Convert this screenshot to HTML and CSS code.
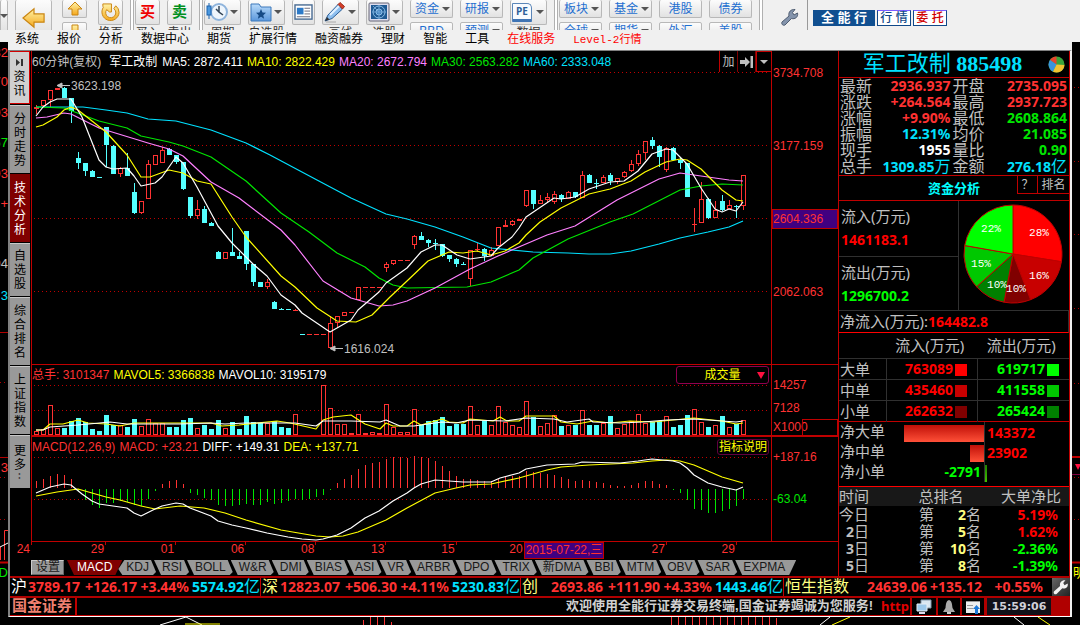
FILE: index.html
```
<!DOCTYPE html>
<html lang="zh-CN">
<head>
<meta charset="utf-8">
<title>军工改制 885498</title>
<link rel="stylesheet" href="styles.css">
</head>
<body>
<svg class="defs" aria-hidden="true">
  <defs>
    <linearGradient id="gold" x1="0" y1="0" x2="0" y2="1"><stop offset="0" stop-color="#fff3a8"/><stop offset="1" stop-color="#f5a81c"/></linearGradient>
    <linearGradient id="blue" x1="0" y1="0" x2="0" y2="1"><stop offset="0" stop-color="#b9dbfa"/><stop offset="1" stop-color="#5b97dc"/></linearGradient>
  </defs>
</svg>

<header class="top">
  <div class="toolbar">
    <button class="tool edge" aria-label="更多"><i class="caret"></i></button>
    <button class="tool back" aria-label="后退"><svg width="24" height="22" viewBox="0 0 26 24"><path d="M1 12 13 2V7.500H24V16.500H13V22Z" fill="url(#gold)" stroke="#c98512" stroke-width="1.300"/></svg></button>
    <div class="stack w25">
      <button class="tool small" aria-label="上翻"><svg width="16" height="15" viewBox="0 0 16 15"><path d="M8 1 15 8H11V14H5V8H1Z" fill="url(#gold)" stroke="#c98512"/></svg></button>
      <button class="tool small" aria-label="下翻"><svg width="16" height="15" viewBox="0 0 16 15"><path d="M8 14 15 7H11V1H5V7H1Z" fill="url(#gold)" stroke="#c98512"/></svg></button>
    </div>
    <div class="unit w25 turn"><button class="tool tall" aria-label="换页"><svg width="21" height="21" viewBox="0 0 22 22"><path d="M3.500 5.500A9 9 0 1 0 20 11A9 9 0 0 0 16.500 4L14.500 7A5.300 5.300 0 1 1 7 8L10 10.500H12V2H3V4.500Z" fill="url(#gold)" stroke="#c98512"/></svg></button><span>换页</span></div>
    <i class="rule"></i>
    <div class="unit w25"><button class="tool tall buy">买</button><span>买入</span></div>
    <div class="unit w25"><button class="tool tall sell">卖</button><span>卖出</span></div>
    <i class="rule"></i>
    <div class="unit w37"><button class="tool tall split" aria-label="周期"><svg width="22" height="22" viewBox="0 0 22 22"><circle cx="13" cy="11" r="8" fill="#eef5fc" stroke="#8fb4dc" stroke-width="2"/><path d="M13 5V11L17 14M13 11 10 8" stroke="#345" fill="none" stroke-width="1.500"/><path d="M3 2V18" stroke="#1d62ad"/><rect x="1" y="5" width="4" height="9" fill="#4b98df" stroke="#1d62ad"/></svg><i class="caret"></i></button><span>周期</span></div>
    <div class="unit w37"><button class="tool tall split" aria-label="自选股"><svg width="22" height="22" viewBox="0 0 22 22"><path d="M1 3H9L11 6H21V20H1Z" fill="url(#blue)" stroke="#3d78bb"/><path d="m11 8 1.500 3.500 3.500.3-2.700 2.400.8 3.600-3.100-2-3.100 2 .8-3.600L6 11.800l3.500-.3Z" fill="#174b86"/></svg><i class="caret"></i></button><span>自选股</span></div>
    <button class="tool tall w23" aria-label="资讯"><svg width="19" height="17" viewBox="0 0 20 18"><rect x="1" y="1" width="18" height="15" fill="#fff" stroke="#4b6d94" stroke-width="1.500"/><rect x="3" y="4" width="7" height="7" fill="#2d7ac8"/><path d="M11 4.500H17M11 7.500H17M11 10.500H17M3 13.500H17" stroke="#667"/></svg></button>
    <div class="unit w37"><button class="tool tall split" aria-label="画线"><svg width="22" height="22" viewBox="0 0 22 22"><path d="M1 20 4 14 14 3.500 18.500 8 8 17.500Z" fill="#8fc0f0" stroke="#2b5e97"/><path d="m14 3.500 2-2 4.500 4-2 2.500Z" fill="#d8402a" stroke="#9a2a1a"/><path d="m1 20 2-4 2.500 2.500Z" fill="#333"/><path d="m6 14 9-9" stroke="#e3f1ff" stroke-width="2"/><path d="M2 21H12" stroke="#aaa"/></svg><i class="caret"></i></button><span>画线</span></div>
    <div class="unit w37"><button class="tool tall split" aria-label="选股"><svg width="22" height="22" viewBox="0 0 22 22"><rect x="1" y="2" width="20" height="18" rx="1" fill="#dde" stroke="#667"/><rect x="3" y="4" width="16" height="14" fill="#1f5a93"/><circle cx="11" cy="11" r="6" fill="none" stroke="#8fc0ea"/><circle cx="11" cy="11" r="3" fill="#3f81bf" stroke="#8fc0ea"/><path d="M11 11 5 5M4 11H18M11 4V18" stroke="#6fa3d3"/></svg><i class="caret"></i></button><span>选股</span></div>
    <div class="stack w43"><button class="tool small text split">资金<i class="caret"></i></button><button class="tool small text">BBD</button></div>
    <div class="stack w43"><button class="tool small text split">研报<i class="caret"></i></button><button class="tool small text split">预测<i class="caret"></i></button></div>
    <div class="unit w37"><button class="tool tall split pe" aria-label="PE 数据"><span class="sheet">PE</span><i class="caret"></i></button><span>数据</span></div>
    <i class="rule"></i>
    <div class="stack w43"><button class="tool small text split">板块<i class="caret"></i></button><button class="tool small text split">全球<i class="caret"></i></button></div>
    <div class="stack w43"><button class="tool small text split">基金<i class="caret"></i></button><button class="tool small text split">期货<i class="caret"></i></button></div>
    <div class="stack w43"><button class="tool small text">港股</button><button class="tool small text">外汇</button></div>
    <div class="stack w43"><button class="tool small text">债券</button><button class="tool small text">美股</button></div>
    <i class="rule"></i>
    <button class="wrench" aria-label="设置"><svg width="18" height="18" viewBox="0 0 18 18"><path d="M1 14 8 8C7 4 10 1 14 1.500L11.500 4.500 13 7 16.500 5C17.500 9 14 11.500 10.500 10.500L4 17C2 18 0 16 1 14Z" fill="#8494ac" stroke="#4e5c70"/></svg></button>
    <div class="modes"><button class="mode on">全 能 行</button><button class="mode">行 情</button><button class="mode trade">委 托</button></div>
  </div>
  <nav class="menu">
    <a href="#">系统</a><a href="#">报价</a><a href="#">分析</a><a href="#">数据中心</a><a href="#">期货</a><a href="#">扩展行情</a><a href="#">融资融券</a><a href="#">理财</a><a href="#">智能</a><a href="#">工具</a><a href="#" class="hot">在线服务</a><a href="#" class="hot mono">Level-2行情</a>
  </nav>
</header>

<div class="desk">
  <svg class="strip" viewBox="0 0 8 575" preserveAspectRatio="xMinYMin slice" aria-hidden="true">
    <g font-size="13" text-anchor="end" fill="#ff3232"><text x="8" y="15">82</text><text x="8" y="44">70</text><text x="8" y="75">93</text><text x="8" y="105" fill="#00e600">67</text><text x="8" y="136">93</text><text x="8" y="166">+</text><text x="8" y="226" fill="#c0c0c0">94</text><text x="8" y="258" fill="#00e1ff">3</text><text x="8" y="430">3</text><text x="8" y="535" fill="#00e600">D</text></g>
    <path d="M0 290.500H8M0 415.500H8" stroke="#b00000"/><path d="M0 340.500H8M0 435.500H8M0 477.500H8" stroke="#b00000" stroke-dasharray="1 3"/>
    <path d="M4.500 518V488.500H8M.5 518V505" stroke="#ff3232" fill="none"/><path d="M0 505 8 501" stroke="#fff"/><path d="M0 520.500H8" stroke="#c00000" stroke-width="2"/>
  </svg>

  <div class="window">
    <div class="workspace">
      <main class="left">
        <div class="upper">
          <nav class="side">
            <button class="s1"><svg width="9" height="9" viewBox="0 0 9 9"><path d="M1 1 5 4.500 1 8ZM6 1H8V8H6Z" fill="#333"/></svg>资讯</button>
            <button class="s2">分时走势</button>
            <button class="s2 on">技术分析</button>
            <button class="s3">自选股</button>
            <button class="s2">综合排名</button>
            <button class="s2">上证指数</button>
            <button class="s1 more">更多<small>··</small></button>
          </nav>
          <div class="charts">
            <section class="pane">
              <div class="plot">
                <div class="legend">
                  <span class="gray">60分钟(复权)</span><span class="white name">军工改制</span><span class="white">MA5: 2872.411</span><span class="yellow">MA10: 2822.429</span><span class="pink">MA20: 2672.794</span><span class="green">MA30: 2563.282</span><span class="cyan">MA60: 2333.048</span>
                  <div class="tools"><button>加</button><button aria-label="最后一根"><svg width="13" height="12" viewBox="0 0 13 12"><path d="M0 4H5V1L10 6 5 11V8H0ZM10.500 0H13V12H10.500Z" fill="#c0c0c0"/></svg></button><button aria-label="菜单" class="boxed"><i class="caret"></i></button></div>
                </div>
                <svg id="price" class="chart" height="292" viewBox="32 72 739 292" preserveAspectRatio="none" role="img" aria-label="60分钟K线"></svg>
              </div>
              <div class="axis price"><span>3734.708</span><span>3177.159</span><span class="mark">2604.336</span><span>2062.063</span></div>
            </section>
            <section class="pane thick">
              <div class="plot">
                <div class="legend low">
                  <span class="red">总手: 3101347</span><span class="yellow">MAVOL5: 3366838</span><span class="white">MAVOL10: 3195179</span>
                  <label class="pick"><select aria-label="副图指标"><option>成交量</option></select><i></i></label>
                </div>
                <svg id="volume" class="chart" height="50" viewBox="32 385 739 50" preserveAspectRatio="none" role="img" aria-label="成交量"></svg>
              </div>
              <div class="axis vol"><span>14257</span><span>7128</span><span>X1000</span></div>
            </section>
            <section class="pane">
              <div class="plot">
                <div class="legend low">
                  <span class="red">MACD(12,26,9)</span><span class="red">MACD: +23.21</span><span class="white">DIFF: +149.31</span><span class="yellow">DEA: +137.71</span>
                  <button class="explain">指标说明</button>
                </div>
                <svg id="macd" class="chart" height="84" viewBox="32 457 739 84" preserveAspectRatio="none" role="img" aria-label="MACD"></svg>
              </div>
              <div class="axis osc"><span>+187.16</span><span class="green">-63.04</span></div>
            </section>
          </div>
        </div>
        <div class="dates"><span>24</span><span>29</span><span>01</span><span>06</span><span>08</span><span>13</span><span>15</span><span class="under">20</span><span><b>2015-07-22,三</b>27</span><span>29</span></div>
        <div class="tabs">
          <button class="set">设置</button><button class="on">MACD</button><button>KDJ</button><button>RSI</button><button>BOLL</button><button>W&amp;R</button><button>DMI</button><button>BIAS</button><button>ASI</button><button>VR</button><button>ARBR</button><button>DPO</button><button>TRIX</button><button>新DMA</button><button>BBI</button><button>MTM</button><button>OBV</button><button>SAR</button><button class="last">EXPMA</button>
        </div>
      </main>

      <aside class="quote">
        <h1><span><em>军工改制</em> 885498</span>
          <svg width="17" height="17" viewBox="0 0 17 17"><circle cx="8.500" cy="8.500" r="8" fill="#3aa53a"/><path d="M8.500 8.500V.5A8 8 0 0 0 2 4Z" fill="#e8452c"/><path d="M8.500 8.500 2 4A8 8 0 0 0 5 15.700Z" fill="#3b93dd"/><path d="M8.500 8.500 5 15.700A8 8 0 0 0 16.500 9Z" fill="#f2c230"/></svg></h1>
        <dl class="facts">
          <dt>最新</dt><dd class="red">2936.937</dd><dt>开盘</dt><dd class="red">2735.095</dd>
          <dt>涨跌</dt><dd class="red">+264.564</dd><dt>最高</dt><dd class="red">2937.723</dd>
          <dt>涨幅</dt><dd class="red">+9.90%</dd><dt>最低</dt><dd class="green">2608.864</dd>
          <dt>振幅</dt><dd class="cyan">12.31%</dd><dt>均价</dt><dd class="green">21.085</dd>
          <dt>现手</dt><dd class="white">1955</dd><dt>量比</dt><dd class="green">0.90</dd>
          <dt>总手</dt><dd class="cyan">1309.85<em>万</em></dd><dt>金额</dt><dd class="cyan">276.18<em>亿</em></dd>
        </dl>
        <div class="fundhead"><h2>资金分析</h2><button>？</button><button>排名</button></div>
        <div class="flow">
          <div class="flowtext">
            <div><span>流入(万元)</span><b class="hotred">1461183.1</b></div>
            <div><span>流出(万元)</span><b class="lime">1296700.2</b></div>
          </div>
          <svg class="pie" width="100" height="100" viewBox="0 0 100 100" role="img" aria-label="资金占比">
            <g stroke="#c00000"><path d="M50 50V1A49 49 0 0 1 98.400 57.700Z" fill="#ff0000"/><path d="M50 50 98.400 57.700A49 49 0 0 1 67.600 95.700Z" fill="#c80000"/><path d="M50 50 67.600 95.700A49 49 0 0 1 41.100 98.200Z" fill="#800000"/><path d="M50 50 41.100 98.200A49 49 0 0 1 13.600 82.800Z" fill="#008000"/><path d="M50 50 13.600 82.800A49 49 0 0 1 1.700 41.500Z" fill="#00c800"/><path d="M50 50 1.700 41.500A49 49 0 0 1 50 1Z" fill="#00ff00"/></g>
            <g fill="#fff" text-anchor="middle"><text x="76" y="32">28%</text><text x="76" y="75">16%</text><text x="53" y="88">10%</text><text x="34" y="84">10%</text><text x="18" y="63">15%</text><text x="28" y="28">22%</text></g>
          </svg>
        </div>
        <p class="net">净流入(万元):<b class="hotred">164482.8</b></p>
        <table class="orders">
          <thead><tr><th></th><th>流入(万元)</th><th>流出(万元)</th></tr></thead>
          <tbody>
            <tr><th>大单</th><td class="hotred">763089<i class="r1"></i></td><td class="lime">619717<i class="g1"></i></td></tr>
            <tr><th>中单</th><td class="hotred">435460<i class="r2"></i></td><td class="lime">411558<i class="g2"></i></td></tr>
            <tr><th>小单</th><td class="hotred">262632<i class="r3"></i></td><td class="lime">265424<i class="g3"></i></td></tr>
          </tbody>
        </table>
        <div class="bars">
          <div><span>净大单</span><span class="neg"><i style="width:80px"></i></span><b class="hotred">143372</b></div>
          <div><span>净中单</span><span class="neg"><i style="width:14px"></i></span><b class="hotred">23902</b></div>
          <div><span>净小单</span><span class="neg"><b class="lime">-2791</b></span><b class="sliver"></b></div>
        </div>
        <table class="rank">
          <thead><tr><th>时间</th><th>总排名</th><th>大单净比</th></tr></thead>
          <tbody>
            <tr><th>今日</th><td>第<b>2</b>名</td><td class="hotred">5.19%</td></tr>
            <tr><th><b>2</b>日</th><td>第<b>5</b>名</td><td class="hotred">1.62%</td></tr>
            <tr><th><b>3</b>日</th><td>第<b>10</b>名</td><td class="lime">-2.36%</td></tr>
            <tr><th><b>5</b>日</th><td>第<b>8</b>名</td><td class="lime">-1.39%</td></tr>
          </tbody>
        </table>
      </aside>
    </div>

    <div class="ticker">
      <div class="c1"><em class="white">沪</em><b>3789.17</b><b>+126.17</b><b>+3.44%</b><b class="cyan">5574.92<em>亿</em></b></div>
      <div class="c2"><em>深</em><b>12823.07</b><b>+506.30</b><b>+4.11%</b><b class="cyan">5230.83<em>亿</em></b></div>
      <div class="c3"><em>创</em><b>2693.86</b><b>+111.90</b><b>+4.33%</b><b class="cyan">1443.46<em>亿</em></b></div>
      <div class="c4"><em>恒生指数</em><b>24639.06</b><b>+135.12</b><b>+0.55%</b></div>
      <button aria-label="设置"><svg width="16" height="16" viewBox="0 0 18 18"><path d="M1 14 8 8C7 4 10 1 14 1.500L11.500 4.500 13 7 16.500 5C17.500 9 14 11.500 10.500 10.500L4 17C2 18 0 16 1 14Z" fill="#f4f4f4"/></svg></button>
    </div>

    <footer class="status">
      <strong class="brand">国金证券</strong>
      <p>欢迎使用全能行证券交易终端,国金证券竭诚为您服务!</p>
      <a href="#">http</a>
      <button aria-label="连接"><svg width="16" height="15" viewBox="0 0 16 15"><path d="M5 1H15V9H5Z" fill="#d9e6f0" stroke="#8298aa"/><path d="M1 5H11V12H1Z" fill="#9cc8ea" stroke="#e8eef4"/><path d="M3 14H9" stroke="#dde" stroke-width="2"/></svg></button>
      <button aria-label="提醒"><svg width="14" height="14" viewBox="0 0 14 14"><path d="M7 0C10 1 10 4 10.500 8L13 12H1L3.500 8C4 4 4 1 7 0Z" fill="#aaa"/><path d="M5 13H9" stroke="#ccc" stroke-width="2"/></svg></button>
      <button aria-label="上传"><svg width="16" height="15" viewBox="0 0 16 15"><rect x="1" y="2" width="14" height="12" fill="#eee"/><path d="M1 2.500H15M2 6.500H8M2 9.500H8" stroke="#999"/><path d="M11.500 6 15 10H13V15H10V10H8Z" fill="#1d78d8"/></svg></button>
      <time>15:59:06</time>
      <i class="end"></i>
    </footer>
  </div>

  <svg class="strip" viewBox="0 0 8 575" preserveAspectRatio="xMinYMin slice" aria-hidden="true">
    <path d="M2 45.500H8M2 119.500H8M2 192.500H8M2 266.500H8M2 341.500H8M2 435.500H8M2 477.500H8" stroke="#b00000" stroke-dasharray="1 3"/>
    <path d="M0 415H8M0 520.500H8" stroke="#c00000" stroke-width="2"/><path d="M0 432.500H8" stroke="#800040"/><path d="M3 422H9L6 428Z" fill="#ff1040"/><text x="1" y="535" font-size="13" fill="#ffff00">明</text>
  </svg>
</div>
<svg class="below" height="8" viewBox="0 617 1080 8" preserveAspectRatio="none" aria-hidden="true">
  <path d="M160 625 186 617 202 625M820 625 830 617M1014 617 1024 625" fill="none" stroke="#fff"/><path d="M185 624H220M832 625 850 617M1038 617 1050 625" fill="none" stroke="#ffff00"/>
  <path d="M363.500 625V620M370.500 625V617M377.500 625V617M384.500 625V617M391.500 625V622M671.500 625V617M678.500 625V617M685.500 625V617M692.500 625V617M699.500 625V617M706.500 625V617M713.500 625V617M720.500 625V617M727.500 625V617M734.500 625V617M741.500 625V617M748.500 625V617M755.500 625V617M762.500 625V617M769.500 625V617M776.500 625V618" stroke="#ff3232"/>
</svg>
<script src="chart.js"></script>
</body>
</html>
```

FILE: styles.css
```
* { box-sizing: border-box; }
body {
  margin: 0;
  min-height: 100vh;
  background: #000;
  color: #c0c0c0;
  font: 12px/16px "Liberation Sans", "Noto Sans CJK SC", sans-serif;
  overflow: hidden;
}
button, select { font: inherit; color: inherit; background: none; border: 0; padding: 0; margin: 0; }
a { text-decoration: none; color: inherit; }
h1, h2, p, dl, dd, dt { margin: 0; font-weight: normal; }
em, i { font-style: normal; }
table { border-collapse: collapse; }
th { font-weight: normal; }
svg { flex: none; }
.defs { position: absolute; width: 0; height: 0; }

.red { color: #ff3232; }
.hotred { color: #ff0000; }
.green { color: #00e600; }
.lime { color: #00ff00; }
.cyan { color: #00e1ff; }
.white { color: #fff; }
.yellow { color: #ffff00; }
.pink { color: #ff80ff; }
.gray { color: #c0c0c0; }

.caret { width: 0; height: 0; border: 4px solid transparent; border-top-color: #555; border-bottom: 0; flex: none; }

/* toolbar */
.top { background: #f0f0f0; height: 50px; }
.toolbar { display: flex; align-items: flex-start; gap: 7px; height: 30px; overflow: hidden; color: #333; }
.tool {
  display: flex; align-items: center; justify-content: center; flex: none;
  background: linear-gradient(#fcfcfc, #e2e2e2); border: 1px solid #b8b8b8; border-top: 0; border-radius: 2px;
}
.edge { width: 8px; height: 33px; }
.back { width: 37px; height: 36px; margin-right: 3px; }
.stack { display: flex; flex-direction: column; gap: 4px; flex: none; }
.small { height: 18px; width: 100%; }
.small + .small { border-top: 1px solid #b8b8b8; }
.unit { display: flex; flex-direction: column; align-items: center; gap: 1px; flex: none; line-height: 14px; }
.unit .tool { width: 100%; }
.tall { height: 25px; }
.w23 { width: 23px; }
.w25 { width: 25px; }
.turn { margin-left: 4px; }
.w37 { width: 37px; }
.w43 { width: 43px; }
.rule { width: 4px; height: 30px; border: solid #b0b0b0; border-width: 0 1px; background: #fff; flex: none; margin-right: -6px; }
.split { justify-content: space-between; padding: 0 2px 0 1px; }
.text { color: #1e6fd0; }
.text.split { padding-left: 4px; }
.buy, .sell { font-size: 15px; font-weight: bold; color: #f00000; }
.sell { color: #009020; }
.sheet { background: #f8fbff; border: 1px solid #5b86b8; border-bottom: 3px solid #3f74b4; border-radius: 1px 5px 1px 1px; font: bold 10px/15px "Open Sans", sans-serif; color: #2d5f9a; padding: 0 3px; }
.wrench { width: 44px; padding: 8px 0 0 8px; border-right: 1px solid #999; height: 30px; }
.modes { display: flex; gap: 2px; padding-top: 10px; margin-left: -2px; }
.mode { width: 34px; height: 16px; line-height: 14px; border: 1px solid #104888; background: #fff; color: #104888; white-space: nowrap; border-top-color: #7a5cff; font-weight: 500; }
.mode.on { width: 62px; background: #104f90; color: #fff; font-weight: bold; font-size: 13px; border-color: #104f90; }
.mode.trade { color: #d00000; }
.menu { display: flex; align-items: baseline; gap: 18px; padding: 0 15px; color: #000; line-height: 18px; white-space: nowrap; }
.menu .hot { color: #ff0000; }
.mono { font-family: "Liberation Mono", "Noto Sans CJK SC", monospace; font-size: 11px; }

/* desktop */
.desk { display: grid; grid-template-columns: 8px minmax(0, 1fr) 8px; }
.strip { width: 8px; height: 575px; margin-top: -8px; background: #000; }
.below { display: block; width: 100%; }
.window { border: 1px solid #808080; border-width: 1px 2px 1px 2px; border-right-color: #f0f0f0; border-bottom-color: #fff; background: #000; }
.workspace { display: grid; grid-template-columns: minmax(0, 1fr) 232px; border-bottom: 2px solid #b00000; }
.left { min-width: 0; }
.upper { display: grid; grid-template-columns: 21px minmax(0, 1fr); }

.side { display: flex; flex-direction: column; gap: 1px; }
.side button { background: #999; color: #000; width: 20px; line-height: 14px; border-top: 1px solid #c8c8c8; display: flex; flex-direction: column; align-items: center; justify-content: center; padding: 0 4px; white-space: normal; word-break: break-all; gap: 3px; }
.side .s1 { height: 53px; }
.side .s1:first-child { background: #d0d0d0; border: 1px solid #d00000; border-left: 0; }
.side .s2 { height: 68px; }
.side .s3 { height: 53px; }
.side .on { background: #800000; color: #fff; border-color: #800000; }
.side .more { gap: 0; }
.side small { font-size: 12px; line-height: 12px; writing-mode: vertical-rl; }

.charts { border-left: 1px solid #c00000; }
.pane { display: grid; grid-template-columns: minmax(0, 1fr) 67px; border-bottom: 1px solid #c00000; }
.pane.thick { border-bottom-width: 2px; }
.plot { min-width: 0; }
.chart { display: block; width: 100%; overflow: visible; }
.chart text { font-size: 12px; fill: #c0c0c0; }
.legend { display: flex; align-items: center; gap: 4px; height: 21px; white-space: nowrap; }
.legend .name { margin: 0 1px 0 4px; }
.legend.low { height: 20px; }
.tools { margin-left: auto; display: flex; align-self: stretch; border-left: 1px solid #c00000; color: #c0c0c0; }
.tools button { width: 18px; display: flex; align-items: center; justify-content: center; border-right: 1px solid #800000; }
.tools .boxed { width: 15px; border: 1px solid #c00000; border-right: 0; }
.tools .caret { border-top-color: #c0c0c0; }
.pick { margin-left: auto; position: relative; margin-right: 2px; }
.pick select { appearance: none; width: 93px; height: 18px; border: 1px solid #900050; border-radius: 3px; color: #ffff00; text-align: center; text-align-last: center; display: block; line-height: 16px; background: #000; }
.pick i { position: absolute; right: 4px; top: 6px; border: 4px solid transparent; border-top: 7px solid #ff1040; border-bottom: 0; }
.explain { margin-left: auto; margin-right: 2px; color: #ffff00; border: 1px solid #600040; border-radius: 3px; height: 16px; line-height: 14px; padding: 0 1px; }

.axis { border-left: 1px solid #c00000; color: #ff3232; display: flex; flex-direction: column; }
.axis span { padding-left: 1px; }
.axis.price { padding-top: 12px; gap: 53px; }
.axis.price span { line-height: 20px; height: 20px; }
.axis .mark { background: #400080; outline: 1px solid #c00000; outline-offset: -1px; }
.axis.vol span, .axis.osc span { line-height: 13px; }
.axis.vol { padding-top: 14px; gap: 10px; position: relative; }
.axis.vol span:last-child { margin-top: -4px; }
.axis.vol::after { content: ""; position: absolute; left: 30px; right: 0; bottom: 0; height: 15px; border: 1px solid #c00000; border-bottom: 0; }
.axis.osc { padding-top: 14px; gap: 29px; }
.axis.osc .green { color: #00e600; }

.dates { display: grid; grid-template-columns: 22px 74fr 70fr 70fr 70fr 70fr 70fr 70fr 140fr 70fr 35fr 66px; height: 18px; line-height: 15px; color: #ff3232; text-align: right; }
.dates span { padding-right: 2px; background: linear-gradient(#c00000, #c00000) right top / 1px 3px no-repeat; position: relative; }
.dates .under { padding-right: 4px; }
.dates b { font-weight: normal; position: absolute; left: -3px; top: 0; background: #400080; border: 1px solid #c00000; padding: 0 1px; line-height: 15px; white-space: nowrap; }

.tabs { display: flex; height: 16px; padding-left: 21px; padding-bottom: 1px; color: #000; }
.tabs button { background: #999; color: #181818; line-height: 15px; padding: 0 9px 0 8px; margin-left: -4px; white-space: nowrap; flex: none;
  clip-path: polygon(0 0, calc(100% - 7px) 0, calc(100% - 2px) 80%, calc(100% - 5px) 100%, 7px 100%); }
.tabs .set { clip-path: none; margin: 0 7px 0 0; padding: 0 4px; border: 1px solid #666; border-left-color: #ccc; border-top-color: #ccc; line-height: 13px; width: 33px; }
.tabs .on { background: #800000; color: #fff; padding: 0 10px; clip-path: polygon(0 0, 100% 0, calc(100% - 7px) 100%, 7px 100%); }
.tabs .on + button { clip-path: polygon(6px 0, calc(100% - 7px) 0, calc(100% - 2px) 80%, calc(100% - 5px) 100%, 4px 100%, 0 60%); }
.tabs .last { clip-path: polygon(0 0, 100% 0, calc(100% - 7px) 100%, 7px 100%); padding-right: 11px; }

/* quote panel */
.quote { border-left: 1px solid #c00000; border-right: 1px solid #c00000; font-family: "Noto Sans", "Noto Sans CJK SC", sans-serif; font-size: 15px; display: flex; flex-direction: column; }
.quote b, .quote dd, .quote td { font-size: 14px; }
.quote h1 { display: grid; grid-template-columns: 1fr 17px; align-items: center; height: 27px; padding: 0 4px 0 0; border-bottom: 1px solid #c00000; color: #00e1ff; text-align: center; font: bold 22px/26px "Liberation Serif", "Noto Sans CJK SC", serif; white-space: nowrap; }
.quote h1 span { padding-right: 10px; padding-left: 8px; }
.quote h1 em { font-size: 22px; }
.quote h1 svg { display: block; }
.facts { display: grid; grid-template-columns: 32px 1fr 34px 1fr; padding: 0 2px 1px 1px; border-bottom: 1px solid #c00000; line-height: 16px; }
.facts dt { font-size: 16px; white-space: nowrap; height: 16px; }
.facts dd { font-weight: bold; text-align: right; height: 16px; }
.facts dd:nth-of-type(odd) { padding-right: 2px; }
.quote em { font-weight: normal; font-size: 16px; }
.quote h1 em { font-size: 22px; }
.fundhead { display: grid; grid-template-columns: 1fr 20px 32px; height: 25px; border-bottom: 1px solid #c00000; }
.fundhead h2 { font: bold 13px/23px "Noto Sans CJK SC", sans-serif; color: #00ffff; text-align: center; padding-left: 52px; }
.fundhead button { font-size: 12px; height: 18px; line-height: 16px; border-left: 1px solid #c00000; border-bottom: 1px solid #c00000; }
.flow { display: grid; grid-template-columns: 1fr 110px; height: 110px; border-bottom: 1px solid #303030; }
.flowtext { border-right: 1px solid #303030; display: grid; grid-template-rows: 1fr 1fr; }
.flowtext div { display: flex; flex-direction: column; padding: 5px 2px 0; gap: 4px; line-height: 20px; }
.flowtext div + div { border-top: 1px solid #303030; }
.pie { margin: 3px 0 0 4px; }
.pie text { font-family: "Liberation Mono", monospace; font-size: 11px; }
.net { height: 22px; line-height: 20px; border-bottom: 1px solid #ff0000; border-right: 1px solid #303030; padding-left: 1px; white-space: nowrap; }
.orders { width: 100%; table-layout: fixed; line-height: 20px; border-bottom: 1px solid #c00000; }
.orders thead th { height: 25px; text-align: center; line-height: 22px; padding: 0 4px 0 0; white-space: nowrap; }
.orders thead th:first-child { width: 47px; }
.orders tbody th { text-align: left; padding: 0 0 0 1px; white-space: nowrap; }
.orders tbody tr > * { border-top: 1px solid #303030; height: 21px; line-height: 18px; }
.orders td { border-left: 1px solid #303030; text-align: right; font-weight: bold; padding: 0 10px 0 0; white-space: nowrap; }
.orders i { display: inline-block; width: 12px; height: 12px; margin-left: 2px; vertical-align: -2px; }
.r1 { background: #f00; } .r2 { background: #c80000; } .r3 { background: #800000; }
.g1 { background: #0f0; } .g2 { background: #00c800; } .g3 { background: #008000; }
.bars { border-bottom: 1px solid #ff0000; padding-bottom: 4px; line-height: 18px; }
.bars div { display: grid; grid-template-columns: 46px 100px 1fr; height: 20px; }
.bars div > span:first-child { padding-left: 1px; white-space: nowrap; }
.bars .neg { display: flex; justify-content: flex-end; border-right: 1px solid #303030; padding-top: 3px; }
.bars .neg i { height: 17px; background: linear-gradient(#c01008, #ff5038); }
.bars .neg b { padding-right: 3px; line-height: 14px; }
.bars div > b { padding: 3px 0 0 2px; line-height: 16px; }
.bars .sliver { width: 2px; height: 17px; margin-top: 3px; padding: 0; background: linear-gradient(#208000, #40c000); }
.rank { width: 100%; table-layout: fixed; }
.rank tr > * { padding: 0; height: 17px; line-height: 17px; white-space: nowrap; font-size: 15px; }
.rank thead tr > * { height: 19px; line-height: 18px; background: #181818; }
.rank thead th:first-child { text-align: left; width: 68px; }
.rank thead th:nth-child(2) { text-align: center; width: 76px; padding-right: 8px; }
.rank thead th:last-child { text-align: right; padding-right: 8px; }
.rank tbody th { text-align: right; padding-right: 38px; }
.rank tbody td:nth-child(2) { color: #c0c0c0; padding-left: 12px; }
.rank td b { display: inline-block; width: 32px; text-align: right; color: #ffff80; }
.rank tbody td:last-child { font-weight: bold; font-size: 14px; text-align: right; padding-right: 11px; }

/* index ticker */
.ticker { display: grid; grid-template-columns: 250fr 260fr 263fr 269fr 18px; height: 20px; line-height: 17px; border-bottom: 2px solid #b00000; font-family: "Noto Sans", "Noto Sans CJK SC", sans-serif; font-size: 14px; color: #ff3232; white-space: nowrap; overflow: hidden; }
.ticker div { display: grid; grid-template-columns: 16px 1fr 57px 52px 71px; text-align: right; padding-left: 1px; min-width: 0; }
.ticker div + div { border-left: 1px solid #c00000; }
.ticker em { font-weight: normal; font-size: 16px; color: #ffff80; text-align: left; }
.ticker .cyan em { color: inherit; }
.ticker .white { color: #fff; }
.ticker .c4 { grid-template-columns: 66px 1fr 55px 61px; padding-right: 9px; }
.ticker button { background: linear-gradient(135deg, #666, #222); height: 18px; display: flex; align-items: center; justify-content: center; }

/* status */
.status { display: grid; grid-template-columns: 67px 1fr 29px 26px 24px 24px 67px 19px; height: 18px; border-bottom: 1px solid #c00000; line-height: 16px; white-space: nowrap; }
.brand { font-size: 15px; font-weight: bold; color: #f08070; border-right: 2px solid #c00000; padding-left: 2px; overflow: hidden; }
.status p { text-align: right; font-weight: bold; font-size: 13px; color: #d0d0d0; padding-right: 8px; overflow: hidden; }
.status a { color: #e00000; font: bold 13px/16px "Noto Sans", sans-serif; overflow: hidden; }
.status button { border-left: 2px solid #b00000; display: flex; align-items: center; justify-content: center; }
.status time { border-left: 3px solid #b00000; font: bold 11px/17px "DejaVu Sans", sans-serif; color: #d0d0d8; text-align: center; background: #101018; }
.end { background: #b00000; }
```

FILE: chart.js
```
const NS = "http://www.w3.org/2000/svg";
const RED = "#ff3232", CYAN = "#54ffff", YELLOW = "#ffff00", WHITE = "#ffffff";
const PINK = "#ff80ff", GREEN = "#00e600", BLUE = "#00e1ff", GRID = "#c00000";
const left = i => 36.5 + 7 * i;

function add(svg, name, attrs, text) {
  const el = document.createElementNS(NS, name);
  for (const key in attrs) el.setAttribute(key, attrs[key]);
  if (text) el.textContent = text;
  svg.append(el);
}
function grid(svg, ys) {
  for (const y of ys) add(svg, "path", { d: `M34 ${y + 0.5}H770`, stroke: GRID, "stroke-dasharray": "1 3", "shape-rendering": "crispEdges" });
}
function line(svg, color, points) {
  add(svg, "polyline", { points, fill: "none", stroke: color, "stroke-width": 1.2, "stroke-linejoin": "round" });
}
function box(svg, kind, x, top, bottom) {
  const hollow = kind === "r" && bottom - top > 2;
  const w = hollow ? 4 : 5, h = Math.max(1, bottom - top);
  add(svg, "rect", { x: x - (hollow ? 2 : 2.5), y: top + (hollow ? 0.5 : 0), width: w, height: hollow ? h - 1 : h,
    fill: hollow ? "#000" : kind === "r" ? RED : CYAN, stroke: hollow ? RED : "none", "shape-rendering": "crispEdges" });
}

// kind, body top, body bottom, high, low
const candles = `r107,109,105,114 r100,106,100,107 r90,100,90,107 r88,90,88,90 c88,98,87,98 c98,111,98,123 c158,163,152,169 c163,171,163,176
c171,177,170,177 c177,178,177,178 c127,145,127,167 c146,174,145,174 r168,174,167,177 c168,176,153,176 c192,213,183,214 r201,213,201,214
r164,199,160,199 r155,165,155,165 r150,163,147,163 c149,155,148,155 c155,162,155,164 c162,189,162,190 c197,216,197,218 r209,216,200,219
c209,223,206,223 c223,226,222,226 c252,259,251,259 r252,259,252,259 c252,256,228,256 c256,259,252,259 c231,264,231,270 c264,282,264,286
c282,287,282,287 r282,287,279,289 c302,309,301,309 c309,310,308,310 c309,310,309,310 r310,311,309,311 c334,335,334,335 r334,335,334,335
r334,335,334,335 r334,335,334,335 r323,348,316,348 r316,323,316,328 r312,316,312,316 r312,313,312,313 r287,300,287,300 r287,288,287,288
r287,288,287,288 r287,288,287,288 r264,268,262,272 r260,264,260,265 r260,261,260,261 r260,261,260,261 r236,245,235,249 c236,240,232,240
c240,243,239,247 c243,244,239,250 c244,256,244,257 c255,259,255,262 c259,264,258,267 c264,265,262,265 r250,279,250,286 r249,250,243,252
c249,256,248,261 r250,256,247,256 r227,246,227,246 r225,227,220,227 r221,225,220,226 r219,221,219,221 r190,206,190,207 c190,204,190,209
r200,204,195,204 r197,200,193,202 r194,202,191,204 c195,199,194,202 r192,199,191,199 c192,197,192,198 r175,198,171,198 c175,183,174,183
c183,184,179,189 r177,183,175,183 c175,181,173,185 r178,182,178,184 r172,177,171,178 r164,171,160,172 r154,164,150,166 r141,153,141,160
c140,146,137,149 c146,157,145,167 r148,170,147,172 c148,160,147,160 c160,163,157,169 c163,197,163,197 r224,225,208,232 r199,223,182,223
c199,218,198,219 r210,218,201,218 c201,210,195,211 r205,209,200,209 c206,207,205,218 r175,206,175,210`.split(/\s+/);

const price = document.getElementById("price");
grid(price, [72, 145, 218, 291]);
candles.forEach((item, i) => {
  const kind = item[0], [top, bottom, high, low] = item.slice(1).split(",").map(Number), x = left(i);
  if (low > high + 1) add(price, "path", { d: `M${x} ${high}V${low}`, stroke: kind === "r" ? RED : CYAN, "shape-rendering": "crispEdges" });
  box(price, kind, x, top, bottom);
});
line(price, BLUE, "36,107 83,107 106,110 127,113 148,119 176,121 211,130 246,143 270,155 317,180 351,198 386,214 407,219 435,227 463,237 491,248 533,252 568,253 589,254 610,254 631,251 659,244 680,238 708,232 729,227 743,221");
line(price, GREEN, "36,107 64,108 99,121 127,128 141,136 169,142 183,146 211,157 246,181 281,213 309,232 337,253 365,267 379,278 393,285 407,288 467,287 491,282 519,270 533,258 568,239 610,222 633,214 680,190 701,186 722,184 743,185");
line(price, PINK, "36,118 47,117 64,113 71,114 99,128 148,143 169,149 183,156 211,182 239,198 281,230 295,245 323,281 351,298 379,306 393,305 407,301 435,288 470,269 498,256 547,235 575,226 617,200 659,179 680,173 701,176 729,180 743,181");
line(price, YELLOW, "36,127 43,125 57,117 64,110 71,107 78,110 106,132 127,155 141,177 150,177 169,170 183,173 197,181 211,184 232,217 246,237 281,276 295,287 317,308 337,321 356,322 372,315 390,297 407,281 428,261 449,252 463,253 477,251 491,255 505,251 519,243 526,235 540,222 561,208 589,194 610,189 631,181 645,172 666,162 680,159 687,160 701,169 722,190 736,200 743,201");
line(price, WHITE, "36,116 43,107 50,102 57,99 71,99 82,117 99,160 106,167 113,169 127,168 134,176 141,186 155,183 162,177 169,167 176,157 183,163 197,187 211,213 218,226 232,243 253,264 267,276 281,295 295,305 302,313 330,332 337,328 351,320 358,310 379,292 386,283 407,268 421,252 435,245 442,245 457,255 470,259 491,256 498,248 512,237 519,228 526,217 554,198 561,199 575,197 589,189 610,182 624,181 638,171 652,154 666,149 673,150 687,164 701,188 715,209 722,212 729,209 736,211 743,202");
add(price, "path", { d: "M58 85.500H70M62 83V88L57 85.500ZM331 348.500H343M335 346V351L330 348.500Z", stroke: "#c0c0c0", fill: "#c0c0c0" });
add(price, "text", { x: 71, y: 90 }, "3623.198");
add(price, "text", { x: 344, y: 353 }, "1616.024");

const volumes = `r431 r429 r405 r428 c428 c421 c418 c422 c429 c431 c415 c425 r425 c427 c419 r426 r419 r423 r423 c427 c427 c420 c418 r428 c425 c429
c420 r428 c422 c429 c416 c422 c423 r423 c421 c427 c428 r414 - - - r385 r408 r424 r424 r433 r414 r433 r432 r433 r404 r427 r432 r432 r409 c425
c421 c420 c417 c426 c424 c424 r406 r425 c421 r425 r406 r422 r425 r427 r401 c417 r426 r423 r415 c426 r425 c425 r410 c425 c425 r423 c416 r428
r424 r421 r414 r423 c422 c421 r416 c427 c425 c415 r409 r422 c427 r425 c416 r427 c424 r420`.split(/\s+/);
const volume = document.getElementById("volume");
grid(volume, [385, 410]);
volumes.forEach((item, i) => { if (item !== "-") box(volume, item[0], left(i), Number(item.slice(1)), 435); });
line(volume, YELLOW, "36,430 43,430 50,424 63,424 78,420 88,423 106,424 120,426 134,423 211,423 222,426 239,425 277,421 290,423 316,429 323,420 333,417 351,415 365,424 380,429 386,423 393,426 407,426 414,421 421,425 442,419 449,422 463,423 470,419 493,421 500,417 507,421 519,421 526,416 554,416 561,422 577,424 593,421 610,423 630,421 653,422 673,420 694,418 722,421 736,424 743,423");
line(volume, WHITE, "36,430 43,430 50,427 78,425 110,422 127,424 180,424 211,423 225,424 246,423 295,423 316,426 323,421 351,421 380,422 386,420 400,426 414,426 428,424 442,422 456,423 470,420 505,421 526,418 554,419 567,422 589,419 593,422 620,423 643,422 667,420 694,419 722,421 736,422 743,421");

const bars = [7, 9, 12, 14, 13, 9, -2, -11, -16, -19, -14, -14, -12, -13, -16, -17, -10, -2, 4, 7, 8, 4, -4, -6, -9, -11, -16, -17, -17, -16, -15,
  -16, -16, -13, -15, -14, -12, -10, -11, -10, -8, -6, -1, 5, 9, 13, 19, 23, 25, 26, 29, 31, 31, 30, 32, 31, 30, 27, 22, 17, 12, 9, 9, 8, 7, 7, 9,
  11, 12, 12, 17, 16, 15, 14, 13, 11, 9, 7, 8, 7, 6, 5, 3, 2, 2, 3, 5, 7, 7, 4, 3, -1, -4, -11, -20, -21, -24, -24, -22, -20, -17, -10];
const macd = document.getElementById("macd");
grid(macd, [457, 499]);
bars.forEach((v, i) => {
  const from = v > 0 ? 488 : 489;
  add(macd, "path", { d: `M${left(i)} ${from}V${from - v}`, stroke: v > 0 ? RED : GREEN, "shape-rendering": "crispEdges" });
});
line(macd, YELLOW, "36,496 57,492 78,489 106,497 120,500 141,506 155,509 180,506 204,508 225,513 246,520 281,530 316,536 330,537 343,536 358,532 386,520 407,508 435,493 456,488 470,485 491,484 519,478 547,470 561,467 589,465 633,463 652,461 667,460 680,461 694,465 722,477 736,481 743,483");
line(macd, WHITE, "36,493 50,487 64,484 71,485 82,494 92,501 99,504 106,505 127,508 134,513 141,516 155,509 162,506 176,503 183,504 190,508 211,516 218,521 232,525 246,528 267,533 288,537 302,539 316,540 323,539 337,535 351,528 365,518 379,511 393,501 407,493 414,488 421,484 435,480 463,482 491,482 500,478 519,473 526,469 547,465 575,464 582,462 620,463 638,461 652,459 673,461 680,463 687,468 694,475 708,483 722,487 736,490 743,487");
```
